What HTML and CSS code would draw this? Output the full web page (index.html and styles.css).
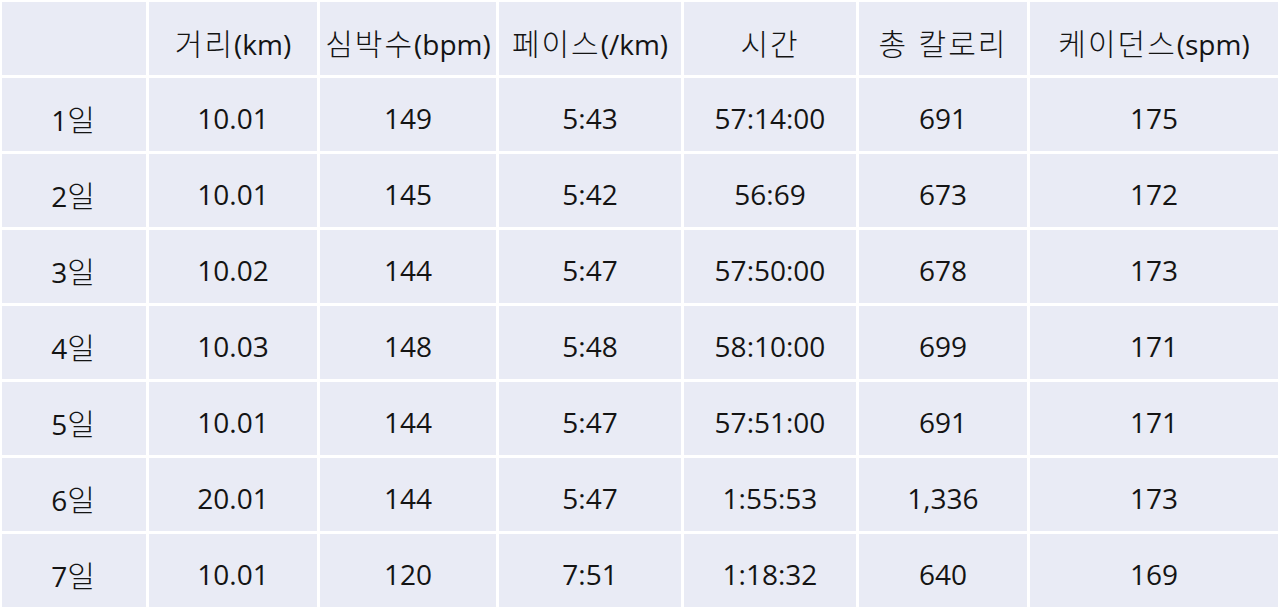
FILE: index.html
```html
<!DOCTYPE html>
<html lang="ko">
<head>
<meta charset="utf-8">
<link rel="stylesheet" href="styles.css">
</head>
<body>
<div class="table">
  <div class="cell"></div>
  <div class="cell"><span class="ko">거리</span>(km)</div>
  <div class="cell"><span class="ko">심박수</span>(bpm)</div>
  <div class="cell"><span class="ko">페이스</span>(/km)</div>
  <div class="cell"><span class="ko">시간</span></div>
  <div class="cell"><span class="ko">총 칼로리</span></div>
  <div class="cell"><span class="ko">케이던스</span>(spm)</div>

  <div class="cell">1<span class="ko">일</span></div>
  <div class="cell">10.01</div>
  <div class="cell">149</div>
  <div class="cell">5:43</div>
  <div class="cell">57:14:00</div>
  <div class="cell">691</div>
  <div class="cell">175</div>

  <div class="cell">2<span class="ko">일</span></div>
  <div class="cell">10.01</div>
  <div class="cell">145</div>
  <div class="cell">5:42</div>
  <div class="cell">56:69</div>
  <div class="cell">673</div>
  <div class="cell">172</div>

  <div class="cell">3<span class="ko">일</span></div>
  <div class="cell">10.02</div>
  <div class="cell">144</div>
  <div class="cell">5:47</div>
  <div class="cell">57:50:00</div>
  <div class="cell">678</div>
  <div class="cell">173</div>

  <div class="cell">4<span class="ko">일</span></div>
  <div class="cell">10.03</div>
  <div class="cell">148</div>
  <div class="cell">5:48</div>
  <div class="cell">58:10:00</div>
  <div class="cell">699</div>
  <div class="cell">171</div>

  <div class="cell">5<span class="ko">일</span></div>
  <div class="cell">10.01</div>
  <div class="cell">144</div>
  <div class="cell">5:47</div>
  <div class="cell">57:51:00</div>
  <div class="cell">691</div>
  <div class="cell">171</div>

  <div class="cell">6<span class="ko">일</span></div>
  <div class="cell">20.01</div>
  <div class="cell">144</div>
  <div class="cell">5:47</div>
  <div class="cell">1:55:53</div>
  <div class="cell">1,336</div>
  <div class="cell">173</div>

  <div class="cell">7<span class="ko">일</span></div>
  <div class="cell">10.01</div>
  <div class="cell">120</div>
  <div class="cell">7:51</div>
  <div class="cell">1:18:32</div>
  <div class="cell">640</div>
  <div class="cell">169</div>
</div>
</body>
</html>
```

FILE: styles.css
```css
html, body {
  margin: 0;
  padding: 0;
  background: #ffffff;
}

.table {
  display: grid;
  grid-template-columns: 144px 168px 176px 182px 172px 168px 248px;
  grid-auto-rows: 73px;
  gap: 3px;
  padding: 2px;
  width: 1280px;
  height: 611px;
  box-sizing: border-box;
  font-family: "Open Sans", "Noto Sans CJK KR", sans-serif;
  font-size: 28px;
  color: #141414;
}

.cell {
  background: #e9ebf5;
  display: flex;
  align-items: baseline;
  justify-content: center;
  padding-top: 22px;
  box-sizing: border-box;
  white-space: nowrap;
  line-height: 36px;
}

.ko {
  font-family: "Noto Sans CJK KR", sans-serif;
  font-size: 30px;
  font-weight: 300;
  letter-spacing: 2px;
}
```
